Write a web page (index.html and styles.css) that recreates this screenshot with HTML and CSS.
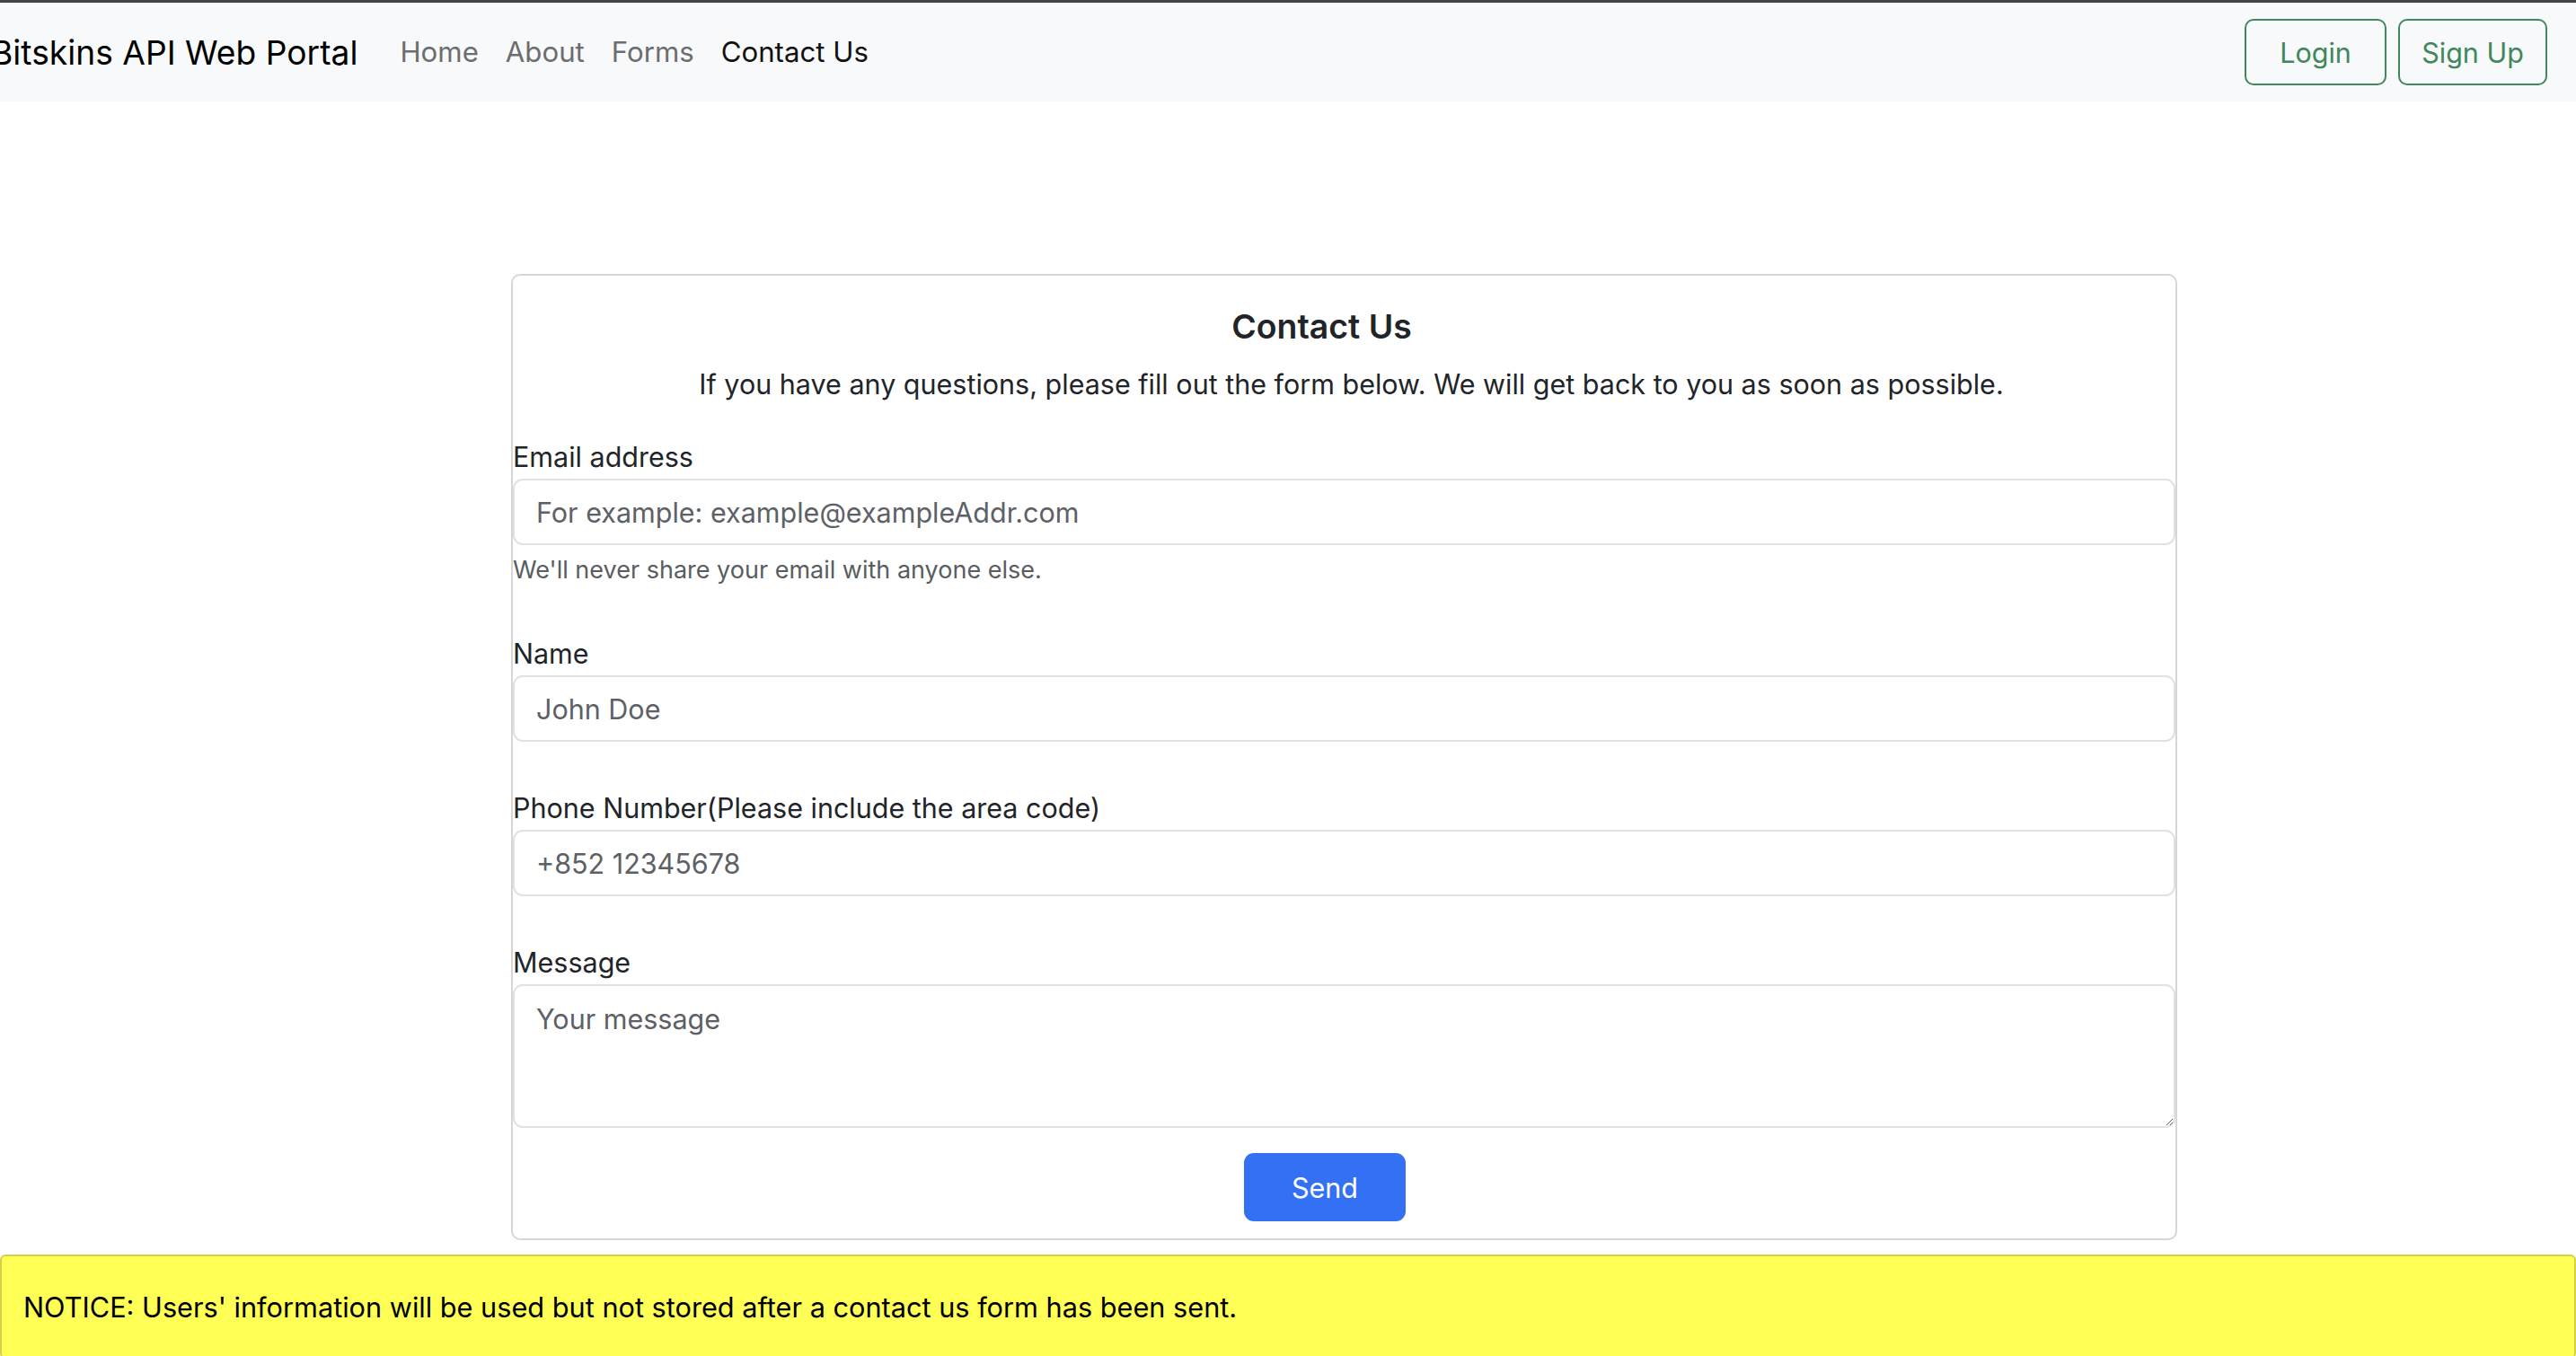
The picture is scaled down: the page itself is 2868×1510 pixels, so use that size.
FILE: index.html
```html
<!DOCTYPE html>
<html lang="en">
<head>
<meta charset="utf-8">
<title>Contact Us - Bitskins API Web Portal</title>
<link rel="stylesheet" href="styles.css">
</head>
<body>
<nav class="navbar">
  <a class="brand" href="#">Bitskins API Web Portal</a>
  <ul class="nav">
    <li><a class="nav-link" href="#">Home</a></li>
    <li><a class="nav-link" href="#">About</a></li>
    <li><a class="nav-link" href="#">Forms</a></li>
    <li><a class="nav-link active" href="#">Contact Us</a></li>
  </ul>
  <div class="auth">
    <button class="btn-outline login">Login</button>
    <button class="btn-outline signup">Sign Up</button>
  </div>
</nav>
<main class="main">
  <section class="card">
    <h5 class="title">Contact Us</h5>
    <p class="subtitle">If you have any questions, please fill out the form below. We will get back to you as soon as possible.</p>
    <form class="form">
      <div class="field">
        <label class="label" for="email">Email address</label>
        <input class="control" id="email" type="email" placeholder="For example: example@exampleAddr.com">
        <small class="help">We'll never share your email with anyone else.</small>
      </div>
      <div class="field">
        <label class="label" for="name">Name</label>
        <input class="control" id="name" type="text" placeholder="John Doe">
      </div>
      <div class="field">
        <label class="label" for="phone">Phone Number(Please include the area code)</label>
        <input class="control" id="phone" type="text" placeholder="+852 12345678">
      </div>
      <div class="field">
        <label class="label" for="msg">Message</label>
        <textarea class="control textarea" id="msg" placeholder="Your message"></textarea>
      </div>
      <div class="actions">
        <button class="send" type="button">Send</button>
      </div>
    </form>
  </section>
</main>
<div class="notice">NOTICE: Users' information will be used but not stored after a contact us form has been sent.</div>
</body>
</html>
```

FILE: styles.css
```css
* { box-sizing: border-box; }
html, body { margin: 0; padding: 0; }
body {
  font-family: Inter, "Noto Sans", "Liberation Sans", sans-serif;
  font-size: 30.5px;
  color: #212529;
  background: #fff;
  overflow: hidden;
}

.navbar {
  display: flex;
  align-items: center;
  height: 113px;
  border-top: 3px solid #444;
  background: #f8f9fa;
  padding-right: 32px;
}
.brand {
  margin-left: -10px;
  font-size: 37.2px;
  color: #000;
  text-decoration: none;
  margin-right: 32px;
  white-space: nowrap;
}
.nav {
  display: flex;
  list-style: none;
  margin: 0;
  padding: 0;
}
.nav-link {
  display: block;
  padding: 0 15px;
  color: #6c6d6f;
  text-decoration: none;
  font-size: 31.2px;
}
.nav-link.active { color: #111; }
.auth {
  margin-left: auto;
  display: flex;
  gap: 13px;
}
.btn-outline {
  height: 74px;
  border: 2px solid #40875c;
  border-radius: 10px;
  background: transparent;
  color: #40875c;
  font-family: inherit;
  font-size: 30.5px;
}
.login { width: 158px; }
.signup { width: 166px; }

.main {
  padding: 192px 444px 0 569px;
}
.card {
  border: 2px solid #d6d6d6;
  border-radius: 10px;
  padding: 35px 0 19px;
}
.title {
  margin: 0;
  font-size: 37.4px;
  font-weight: 600;
  line-height: 44px;
  text-align: center;
  padding-right: 50px;
}
.subtitle {
  margin: 20px 0 0;
  line-height: 44px;
  text-align: center;
  padding-left: 16px;
}
.form { margin-top: 37px; }
.field { display: flex; flex-direction: column; }
.field + .field { margin-top: 52px; }
.label {
  line-height: 44px;
  margin-bottom: 2px;
}
.control {
  height: 74px;
  width: 100%;
  border: 2px solid #dfe1e4;
  border-radius: 11px;
  padding: 0 24px;
  font-family: inherit;
  font-size: 30.5px;
  color: #212529;
  background: #fff;
}
.control::placeholder { color: #5d6166; }
.textarea {
  height: 160px;
  padding-top: 18px;
  resize: vertical;
  display: block;
}
.help {
  margin-top: 9px;
  font-size: 27px;
  line-height: 38px;
  color: #595d61;
}
.actions {
  display: flex;
  justify-content: center;
  padding-right: 43px;
  margin-top: 28px;
}
.send {
  width: 180px;
  height: 76px;
  border: none;
  border-radius: 11px;
  background: #3470f4;
  color: #fff;
  font-family: inherit;
  font-size: 30.5px;
}

.notice {
  margin-top: 16px;
  height: 116px;
  display: flex;
  align-items: center;
  padding-left: 24px;
  background: #ffff55;
  border: 2px solid #d4d04a;
  border-radius: 6px;
  color: #000;
  font-size: 30.7px;
}
```
